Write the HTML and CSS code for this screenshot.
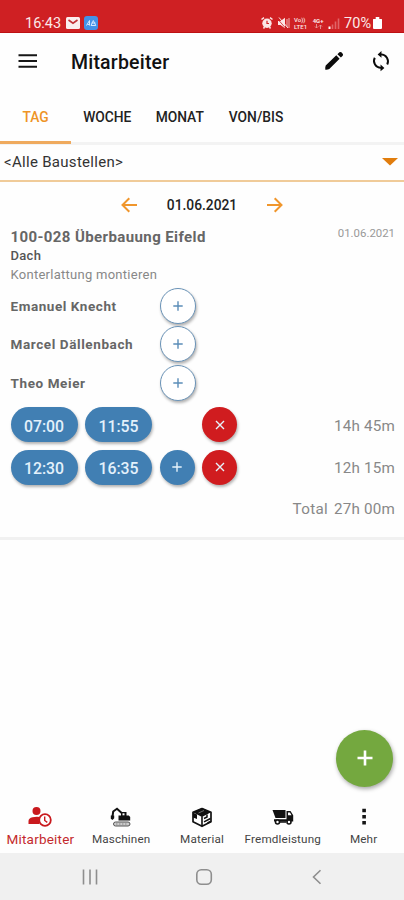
FILE: index.html
```
<!DOCTYPE html>
<html lang="de">
<head>
  <meta charset="UTF-8">
  <meta name="viewport" content="width=device-width, initial-scale=1.0">
  <title>Mitarbeiter</title>
  <link rel="stylesheet" href="styles.css">
</head>
<body>
  <div class="screen">
    <div class="status-bar">
      <span class="clock">16:43</span>
      <svg class="mail-icon" width="14" height="12" viewBox="0 0 14 12"><rect width="14" height="12" rx="1.5" fill="#fbeeee"/><path d="M2.5 3 7 6.2 11.5 3" fill="none" stroke="#c23338" stroke-width="1.6"/></svg>
      <svg class="app-icon" width="14" height="14" viewBox="0 0 14 14"><rect width="14" height="14" rx="3" fill="#4492e8"/><path d="M2.5 9.5 5.5 4.5V9.5M3.5 8.5h2M7 9.5 9.3 4.5l2.5 5zM7.5 7h4" fill="none" stroke="#d4e8ff" stroke-width="1"/></svg>
      <div class="status-right">
        <svg width="12" height="12" viewBox="0 0 12 12"><circle cx="6" cy="6.3" r="4.7" fill="#fbe6e6"/><path d="M.5 2.5 3 .6M11.5 2.5 9 .6M2.5 11.5l1-1.5M9.5 11.5l-1-1.5" stroke="#fbe6e6" stroke-width="1.5"/><path d="M6 3.8v2.7h2" fill="none" stroke="#cf2023" stroke-width="1.2"/></svg>
        <svg width="13" height="12" viewBox="0 0 13 12"><path d="M1 4h2.5L8 .8v10.4L3.5 8H1z" fill="#fbe6e6"/><path d="M10 2v8M12 1v10" stroke="#f0b4b4" stroke-width="1"/><path d="M1 2.500l8 9" stroke="#cf2023" stroke-width=".8"/><path d="M2 .5l9 10.500" stroke="#fbe6e6" stroke-width="1"/></svg>
        <span class="volte"><span>Vo))</span><span>LTE1</span></span>
        <span class="network"><span>4G+</span><svg width="9" height="5" viewBox="0 0 9 5"><path d="M2.500 0v4M1 2.500l1.500 1.500L4 2.500M6.500 5V1M5 2.500 6.500 1 8 2.500" fill="none" stroke="#e89a9a" stroke-width=".9"/></svg></span>
        <svg width="12" height="11" viewBox="0 0 12 11"><path d="M1.500 11V8.500" stroke="#fff" stroke-width="2"/><path d="M4.500 11V6.500M7.500 11V3.500M10.500 11V.5" stroke="#e06468" stroke-width="1.600"/></svg>
        <span class="percent">70%</span>
        <svg width="9" height="12" viewBox="0 0 9 12"><path d="M2.700 0h3.600v2H8.500q.5 0 .5.600V11q0 1-1 1H1q-1 0-1-1V2.600q0-.6.500-.6h2.200z" fill="#fff"/></svg>
      </div>
    </div>

    <header class="app-bar">
      <svg class="menu-icon" width="20" height="14" viewBox="0 0 20 14"><path d="M.5 1.200h18.500M.5 7h18.500M.5 12.800h18.500" stroke="#161616" stroke-width="1.900"/></svg>
      <h1>Mitarbeiter</h1>
      <svg class="edit-icon" width="24" height="24" viewBox="0 0 24 24"><path d="M3.300 20.800q-.3-2.500.4-4.200L14.300 6.300l3.300 3.400L7.300 20q-1.500 1-4 .8zM15.400 5.300l2-2q1-.8 2 0l1.300 1.500q.8 1 0 1.900l-1.800 1.900z" fill="#0b0b0b"/></svg>
      <svg class="sync-icon" width="22" height="22" viewBox="0 0 24 24"><path d="M12 4.800a7.600 7.600 0 0 1 6.800 11M12 19.500A7.600 7.600 0 0 1 5.200 8.400" fill="none" stroke="#0b0b0b" stroke-width="2.100"/><path d="M12.500 1v7.500L8.300 4.800zM11.500 15.700v7.500l4.200-3.700z" fill="#0b0b0b"/></svg>
    </header>

    <nav class="tabs">
      <div class="tab active">TAG</div>
      <div class="tab">WOCHE</div>
      <div class="tab">MONAT</div>
      <div class="tab wide">VON/BIS</div>
    </nav>

    <div class="site-select">
      <span>&lt;Alle Baustellen&gt;</span>
      <svg width="16" height="8" viewBox="0 0 16 8"><path d="M0 0h16L8 7.500z" fill="#e17d0d"/></svg>
    </div>

    <div class="date-nav">
      <svg width="17" height="16" viewBox="0 0 17 16"><path d="M16 8H1.800M8.300 1.200 1.500 8l6.800 6.800" fill="none" stroke="#f0962c" stroke-width="2"/></svg>
      <span>01.06.2021</span>
      <svg width="17" height="16" viewBox="0 0 17 16"><path d="M1 8h14.200M8.700 1.200 15.500 8l-6.800 6.800" fill="none" stroke="#f0962c" stroke-width="2"/></svg>
    </div>

    <section class="entry">
      <div class="entry-head">
        <h2>100-028 Überbauung Eifeld</h2>
        <span class="entry-date">01.06.2021</span>
      </div>
      <div class="part">Dach</div>
      <div class="task">Konterlattung montieren</div>

      <div class="person"><span>Emanuel Knecht</span>
        <button class="round outline"><svg width="12" height="12" viewBox="0 0 12 12"><path d="M6 1.300v9.400M1.300 6h9.400"/></svg></button></div>
      <div class="person"><span>Marcel Dällenbach</span>
        <button class="round outline"><svg width="12" height="12" viewBox="0 0 12 12"><path d="M6 1.300v9.400M1.300 6h9.400"/></svg></button></div>
      <div class="person"><span>Theo Meier</span>
        <button class="round outline"><svg width="12" height="12" viewBox="0 0 12 12"><path d="M6 1.300v9.400M1.300 6h9.400"/></svg></button></div>

      <div class="times">
        <button class="pill">07:00</button>
        <button class="pill">11:55</button>
        <span class="spacer"></span>
        <button class="round red"><svg width="12" height="12" viewBox="0 0 12 12"><path d="M2 2l8 8M10 2l-8 8"/></svg></button>
        <span class="hours">14h 45m</span>
      </div>
      <div class="times">
        <button class="pill">12:30</button>
        <button class="pill">16:35</button>
        <button class="round blue"><svg width="12" height="12" viewBox="0 0 12 12"><path d="M6 1.300v9.400M1.300 6h9.400"/></svg></button>
        <button class="round red"><svg width="12" height="12" viewBox="0 0 12 12"><path d="M2 2l8 8M10 2l-8 8"/></svg></button>
        <span class="hours">12h 15m</span>
      </div>
      <div class="total"><span>Total</span><span class="hours">27h 00m</span></div>
    </section>

    <button class="fab"><svg width="16" height="16" viewBox="0 0 16 16"><path d="M8 .5v15M.5 8h15" stroke="#fff" stroke-width="2.600"/></svg></button>

    <nav class="bottom-nav">
      <div class="item active">
        <svg width="24" height="22" viewBox="0 0 24 22"><circle cx="8.500" cy="5" r="4" fill="#c9191d"/><path d="M.5 18v-3q0-2.800 4-3.700 4-.9 7.500-.2-2 3-.8 6.900z" fill="#c9191d"/><circle cx="17" cy="14" r="5.800" fill="#fff" stroke="#c9191d" stroke-width="1.800"/><path d="M16.700 10.500V14.500l2.600 1.800" fill="none" stroke="#c9191d" stroke-width="1.400"/></svg>
        <span>Mitarbeiter</span>
      </div>
      <div class="item">
        <svg width="24" height="22" viewBox="0 0 24 22"><path d="M3.300 12 4.200 5.500 8 2.800l5 4.400" fill="none" stroke="#111" stroke-width="2"/><path d="M1.800 9.500h3.400v2.700l-1.700 1.700-1.700-1.200zM9.500 9.500h2.500V6h5.500v3.500h2.300l1.400 1.500v3.500H9.500z" fill="#111"/><path d="M13.500 7.300h2v2h-2z" fill="#fff"/><rect x="4.500" y="16" width="16.500" height="4" rx="2" fill="#ccc" stroke="#555" stroke-width="1"/><path d="M7 18h12" stroke="#888" stroke-width="1" stroke-dasharray="1.500 1.500"/></svg>
        <span>Maschinen</span>
      </div>
      <div class="item">
        <svg width="24" height="22" viewBox="0 0 24 22"><path d="M12 2.500 21 6.300v9.500L12 20.300 3 15.800V6.300z" fill="#fff" stroke="#111" stroke-width="1.700" stroke-linejoin="round"/><path d="M12 2 21 6.300 12 11 3 6.300z" fill="#111"/><path d="M3 6.500v5l4 1.500V8.500zM11.200 10.500h1.600V20h-1.600z" fill="#111"/><path d="M14 12.500 17 11V8.500M14 15.800l6.500-3.300M17.500 17l3-1.500" fill="none" stroke="#111" stroke-width="1.500"/><path d="M14 4.500 8.500 7" stroke="#777" stroke-width=".9"/></svg>
        <span>Material</span>
      </div>
      <div class="item">
        <svg width="24" height="22" viewBox="0 0 24 22"><path d="M1.500 4h13v8h-10z" fill="#111"/><path d="M15.500 5h4l2.700 4.200v6.300H3v-2.300h12.500z" fill="#111"/><path d="M17 6.500h2l1.500 2.700H17z" fill="#fff"/><g fill="#fff" stroke="#111" stroke-width="1.600"><circle cx="6.500" cy="16" r="2"/><circle cx="18" cy="16" r="2"/></g><path d="M9 16h6" stroke="#111" stroke-width="1.500"/></svg>
        <span>Fremdleistung</span>
      </div>
      <div class="item">
        <svg width="24" height="22" viewBox="0 0 24 22"><path d="M10.300 2.800h3.600v3.500h-3.600zM10.300 8.900h3.600v3.500h-3.600zM10.300 15h3.600v3.500h-3.600z" fill="#151515"/></svg>
        <span>Mehr</span>
      </div>
    </nav>

    <div class="system-nav">
      <svg width="16" height="16" viewBox="0 0 16 16"><path d="M1.500 .5v15M8 .5v15M14.500 .5v15"/></svg>
      <svg width="18" height="18" viewBox="0 0 18 18"><rect x="1.800" y="1.800" width="14.500" height="14.500" rx="4.500"/></svg>
      <svg width="16" height="16" viewBox="0 0 16 16"><path d="M11.500 1.200 4.500 8l7 6.800"/></svg>
    </div>
  </div>
</body>
</html>
```

FILE: styles.css
```
* {
  box-sizing: border-box;
}
body {
  margin: 0;
  font-family: Roboto, "Liberation Sans", sans-serif;
  background: #fefefe;
}
button {
  border: 0;
  padding: 0;
  font-family: inherit;
}
h1, h2 {
  margin: 0;
}
svg {
  display: block;
  flex: none;
}
.screen {
  position: relative;
  width: 404px;
  height: 900px;
  display: flex;
  flex-direction: column;
  overflow: hidden;
  white-space: nowrap;
}

/* status bar */
.status-bar {
  height: 33px;
  flex: none;
  background: #cf2023;
  border-bottom: 1px solid #bd1013;
  display: flex;
  align-items: center;
  padding: 14px 22px 0 25px;
  color: #fbe9e9;
}
.clock {
  font-size: 14.5px;
  width: 41px;
}
.app-icon {
  margin-left: 4px;
}
.status-right {
  margin-left: auto;
  display: flex;
  align-items: center;
  gap: 4px;
}
.volte {
  display: flex;
  flex-direction: column;
  font-size: 6px;
  line-height: 7px;
  font-weight: 500;
  width: 14px;
}
.network {
  display: flex;
  flex-direction: column;
  align-items: center;
  font-size: 6px;
  line-height: 7px;
  font-weight: 700;
  width: 12px;
}
.percent {
  font-size: 14.5px;
  margin-right: -2px;
}

/* header */
.app-bar {
  height: 57px;
  flex: none;
  display: flex;
  align-items: center;
  padding: 0 12px 2px 18px;
}
.app-bar h1 {
  font-size: 19.5px;
  font-weight: 500;
  letter-spacing: .2px;
  color: #111;
  margin-left: 33px;
  margin-right: auto;
  padding-top: 3px;
}
.edit-icon {
  margin-right: 24px;
}

/* tabs */
.tabs {
  height: 55px;
  flex: none;
  display: flex;
  border-bottom: 3px solid #f3f3f3;
}
.tab {
  width: 72.5px;
  height: 54px;
  display: flex;
  align-items: center;
  justify-content: center;
  font-size: 13.8px;
  font-weight: 500;
  color: #222;
}
.tab.wide {
  width: 80px;
}
.tab.active {
  width: 71px;
  color: #ee9426;
  border-bottom: 3px solid #efaa5e;
  padding-top: 3px;
}

/* building site */
.site-select {
  height: 37px;
  flex: none;
  display: flex;
  align-items: center;
  justify-content: space-between;
  padding: 0 6px 2px 4px;
  border-bottom: 2px solid #f0cb99;
  font-size: 15px;
  letter-spacing: .3px;
  color: #333;
}
.date-nav {
  height: 45px;
  flex: none;
  display: flex;
  align-items: center;
  justify-content: center;
  gap: 29px;
  font-size: 13.8px;
  font-weight: 500;
  color: #222;
}

/* entry */
.entry {
  flex: none;
  height: 313px;
  padding: 0 9px 0 10.5px;
  border-bottom: 3px solid #f1f1f1;
}
.entry-head {
  display: flex;
  justify-content: space-between;
  height: 19px;
}
.entry-head h2 {
  font-size: 15px;
  line-height: 20px;
  font-weight: 700;
  letter-spacing: .4px;
  color: #666;
}
.entry-date {
  font-size: 11.4px;
  line-height: 13px;
  color: #999;
}
.part {
  font-size: 13px;
  line-height: 20px;
  font-weight: 500;
  letter-spacing: .3px;
  color: #555;
}
.task {
  font-size: 13px;
  line-height: 17px;
  letter-spacing: .27px;
  color: #888;
  margin-bottom: 3.5px;
}
.person {
  display: flex;
  align-items: center;
  height: 38.5px;
  font-size: 13.5px;
  font-weight: 700;
  letter-spacing: .6px;
  color: #666;
}
.person > span {
  width: 149px;
}
.person:nth-of-type(4) > span {
  letter-spacing: .55px;
}
.round {
  width: 35px;
  height: 35px;
  border-radius: 50%;
  display: flex;
  align-items: center;
  justify-content: center;
  flex: none;
  box-shadow: 1px 2px 3px rgba(0, 0, 0, .3);
}
.round svg {
  fill: none;
  stroke: #e6f3fb;
  stroke-width: 1.4;
}
.outline {
  width: 36px;
  height: 36px;
  background: #fff;
  border: 1.5px solid #6a93b7;
}
.outline svg {
  stroke: #5b8db8;
}
.blue {
  background: #417fb3;
}
.red {
  background: #d01c1f;
}
.times {
  display: flex;
  align-items: center;
  gap: 7.5px;
  height: 35px;
  margin-top: 5px;
}
.times + .times {
  margin-top: 7.5px;
}
.pill {
  width: 67px;
  height: 35px;
  border-radius: 18px;
  background: #417fb3;
  color: #e3f1fb;
  font-size: 15.8px;
  font-weight: 500;
  padding-top: 3px;
  box-shadow: 1px 2px 3px rgba(0, 0, 0, .3);
}
.spacer {
  width: 35px;
}
.hours {
  margin-left: auto;
  padding-top: 2px;
  font-size: 15.2px;
  letter-spacing: .2px;
  color: #888;
}
.total {
  display: flex;
  justify-content: flex-end;
  gap: 6px;
  margin-top: 14px;
  font-size: 15.2px;
  line-height: 20px;
  letter-spacing: .3px;
  color: #888;
}
.total .hours {
  margin: 0;
  padding: 0;
}

.fab {
  position: absolute;
  right: 11px;
  bottom: 113.5px;
  width: 57px;
  height: 57px;
  border-radius: 50%;
  background: #74a83f;
  display: flex;
  align-items: center;
  justify-content: center;
  box-shadow: 1px 2px 4px rgba(0, 0, 0, .35);
}

/* bottom navigation */
.bottom-nav {
  margin-top: auto;
  height: 47px;
  flex: none;
  display: flex;
}
.item {
  width: 20%;
  display: flex;
  flex-direction: column;
  align-items: center;
  font-size: 11.7px;
  line-height: 14px;
  letter-spacing: .15px;
  color: #444;
}
.item span {
  margin-top: 4px;
}
.item.active {
  font-size: 13.5px;
  letter-spacing: .2px;
  color: #c42a2d;
}
.system-nav {
  height: 47px;
  flex: none;
  background: #f0f0f0;
  display: flex;
  align-items: center;
  justify-content: space-between;
  padding: 0 79px 0 82px;
}
.system-nav svg {
  fill: none;
  stroke: #8e8e8e;
  stroke-width: 1.6;
}
```
